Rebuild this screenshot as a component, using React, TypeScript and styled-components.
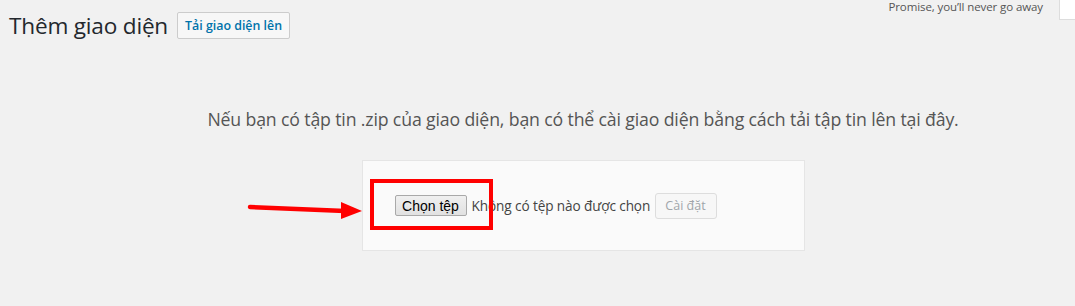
import React from 'react';
import styled, { createGlobalStyle } from 'styled-components';

const GlobalStyle = createGlobalStyle`
  html, body {
    margin: 0;
    padding: 0;
    background: #f1f1f1;
  }
  body {
    width: 1075px;
    height: 306px;
    overflow: hidden;
    font-family: "Open Sans", "Noto Sans", sans-serif;
    color: #444;
  }
`;

const Page = styled.div`
  width: 1075px;
  height: 306px;
  display: flex;
  flex-direction: column;
`;

const Header = styled.div`
  display: flex;
  justify-content: space-between;
  align-items: flex-start;
`;

const TitleRow = styled.div`
  display: flex;
  align-items: center;
  gap: 9px;
  padding: 12px 0 0 9px;
`;

const PageTitle = styled.h1`
  margin: 0;
  font-size: 22.6px;
  font-weight: 400;
  line-height: 26px;
  color: #23282d;
  letter-spacing: -0.2px;
`;

const TitleAction = styled.button`
  height: 27px;
  padding: 0 7px;
  border: 1px solid #ccc;
  border-radius: 2px;
  background: #f7f7f7;
  color: #0073aa;
  font-family: "Open Sans", "Noto Sans", sans-serif;
  font-size: 12.4px;
  font-weight: 600;
  cursor: pointer;
`;

const DollyArea = styled.div`
  display: flex;
  align-items: flex-start;
  gap: 16px;
`;

const Dolly = styled.p`
  margin: 0;
  font-size: 11.5px;
  line-height: 14px;
  color: #555;
  letter-spacing: -0.1px;
`;

const ScreenTab = styled.div`
  width: 15px;
  height: 19px;
  background: #fff;
  border-left: 1px solid #ddd;
  border-bottom: 1px solid #ddd;
`;

const Content = styled.div`
  padding-left: 91px;
  display: flex;
  flex-direction: column;
  align-items: center;
`;

const Description = styled.p`
  margin: 67px 0 0 0;
  text-align: center;
  font-size: 17.7px;
  line-height: 26px;
  color: #555;
  letter-spacing: -0.15px;
  white-space: nowrap;
`;

const UploadCard = styled.form`
  position: relative;
  width: 381px;
  height: 29px;
  margin: 28px 0 0 0;
  padding: 30px 30px;
  background: #fafafa;
  border: 1px solid #e5e5e5;
  display: flex;
  align-items: center;
`;

const FileInput = styled.label`
  display: flex;
  align-items: center;
  gap: 5px;
  width: 256px;
  padding-left: 2px;
`;

const ChooseButton = styled.span`
  display: inline-flex;
  align-items: center;
  justify-content: center;
  box-sizing: border-box;
  width: 72px;
  height: 21px;
  border: 1px solid #a9a9a9;
  border-radius: 2px;
  background: linear-gradient(#f0f0f0, #e1e1e1);
  color: #000;
  font-family: "Liberation Sans", Arial, sans-serif;
  font-size: 14px;
`;

const FileStatus = styled.span`
  font-size: 13.6px;
  color: #444;
  white-space: nowrap;
  letter-spacing: -0.1px;
`;

const InstallButton = styled.button`
  box-sizing: border-box;
  width: 62px;
  height: 26px;
  margin-left: 4px;
  border: 1px solid #ddd;
  border-radius: 3px;
  background: #f7f7f7;
  color: #a0a5aa;
  font-family: "Open Sans", "Noto Sans", sans-serif;
  font-size: 12.5px;
  padding: 0;
`;

const Highlight = styled.div`
  position: absolute;
  left: 7px;
  top: 18px;
  width: 115px;
  height: 43px;
  border: 4px solid #ff0000;
  pointer-events: none;
`;

const Arrow = styled.svg`
  position: absolute;
  left: -116px;
  top: 40px;
  pointer-events: none;
`;

export default function App() {
  return (
    <Page>
      <GlobalStyle />
      <Header>
        <TitleRow>
          <PageTitle>Thêm giao diện</PageTitle>
          <TitleAction type="button">Tải giao diện lên</TitleAction>
        </TitleRow>
        <DollyArea>
          <Dolly>Promise, you’ll never go away</Dolly>
          <ScreenTab />
        </DollyArea>
      </Header>
      <Content>
        <Description>
          Nếu bạn có tập tin .zip của giao diện, bạn có thể cài giao diện bằng cách tải tập tin lên tại đây.
        </Description>
        <UploadCard onSubmit={(e) => e.preventDefault()}>
          <FileInput>
            <ChooseButton>Chọn tệp</ChooseButton>
            <FileStatus>Không có tệp nào được chọn</FileStatus>
          </FileInput>
          <InstallButton type="submit" disabled>
            Cài đặt
          </InstallButton>
          <Highlight />
          <Arrow width="120" height="24" viewBox="0 0 120 24">
            <line x1="3" y1="6" x2="98" y2="10" stroke="#ff0000" strokeWidth="4.5" strokeLinecap="round" />
            <polygon points="94,1 115,10 94,18" fill="#ff0000" />
          </Arrow>
        </UploadCard>
      </Content>
    </Page>
  );
}
